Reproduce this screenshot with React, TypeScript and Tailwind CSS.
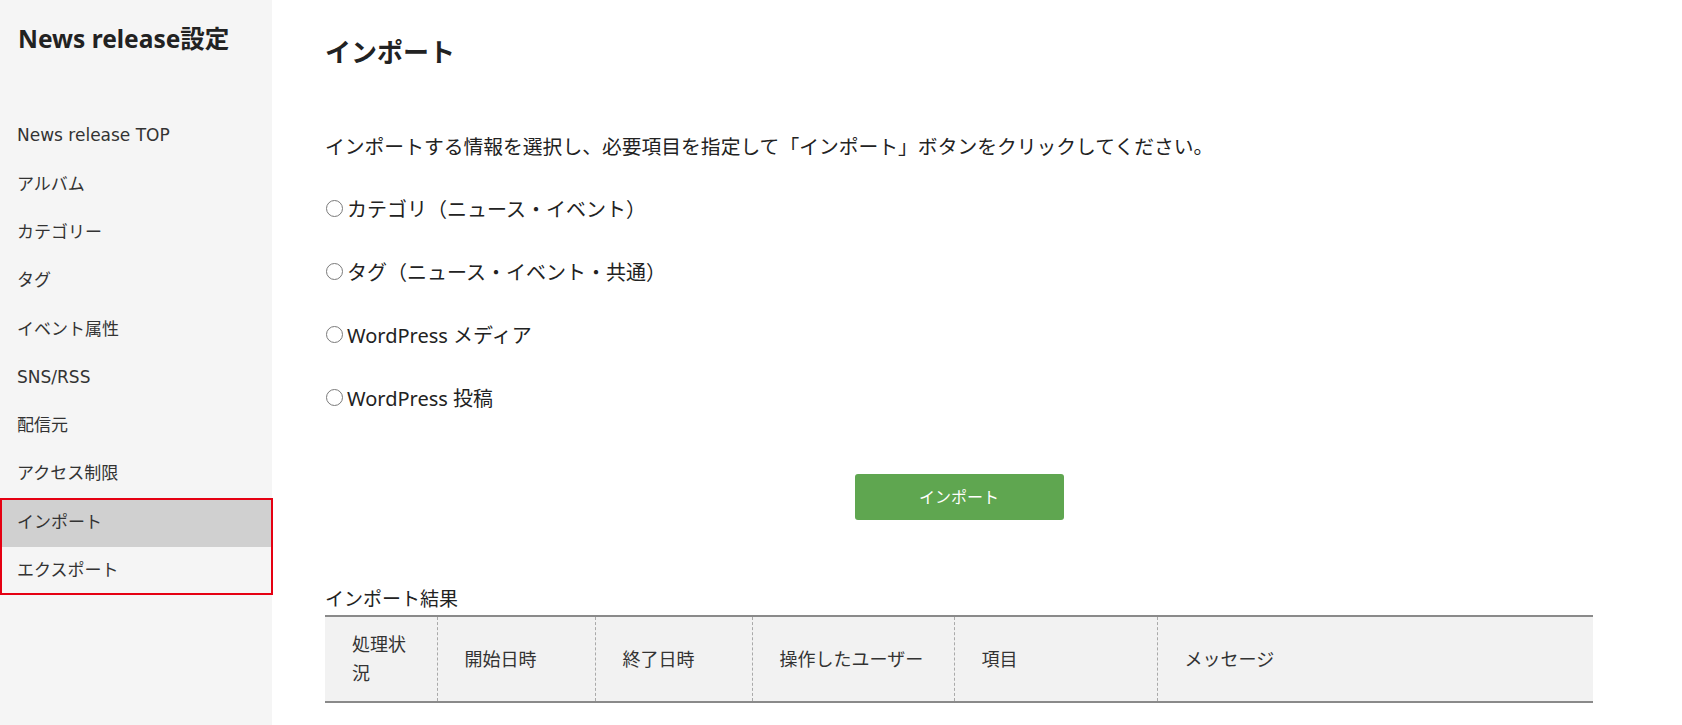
import type { ReactNode } from 'react';

const FONT = { fontFamily: '"Noto Sans", "Noto Sans CJK JP", sans-serif' };
const NAV_FONT = { fontFamily: '"DejaVu Sans", "Noto Sans CJK JP", sans-serif' };

const NAV_ITEMS = [
  'News release TOP',
  'アルバム',
  'カテゴリー',
  'タグ',
  'イベント属性',
  'SNS/RSS',
  '配信元',
  'アクセス制限',
];

const OPTIONS = [
  'カテゴリ（ニュース・イベント）',
  'タグ（ニュース・イベント・共通）',
  'WordPress メディア',
  'WordPress 投稿',
];

const COLUMNS: { label: ReactNode; width: string }[] = [
  { label: <>処理状<br />況</>, width: 'w-[112px]' },
  { label: '開始日時', width: 'w-[158px]' },
  { label: '終了日時', width: 'w-[157px]' },
  { label: '操作したユーザー', width: 'w-[202px]' },
  { label: '項目', width: 'w-[203px]' },
  { label: 'メッセージ', width: '' },
];

function NavItem({ label, active }: { label: string; active?: boolean }) {
  return (
    <div
      className={`h-[48.3px] flex items-center pl-[17px] text-[17px] text-[#333] ${active ? 'bg-[#d0d0d0]' : ''}`}
      style={NAV_FONT}
    >
      {label}
    </div>
  );
}

function Sidebar() {
  return (
    <aside className="w-[272px] shrink-0 bg-[#f5f5f5] min-h-[725px] pt-[23px]">
      <h2 className="pl-[18px] text-[24.5px] leading-[32px] font-bold text-[#222]">
        News release設定
      </h2>
      <nav className="mt-[57px]">
        {NAV_ITEMS.map((item) => (
          <NavItem key={item} label={item} />
        ))}
        {/* highlighted pair */}
        <div className="outline-2 outline-[#e50012] -outline-offset-2 mr-[-1px]">
          <NavItem label="インポート" active />
          <NavItem label="エクスポート" />
        </div>
      </nav>
    </aside>
  );
}

function RadioRow({ label }: { label: string }) {
  return (
    <label className="mt-[33px] flex items-center h-[30px] text-[20px] leading-[30px] text-[#222]">
      <span className="w-[17px] h-[17px] rounded-full border-[1.5px] border-[#7a7a7a] bg-white mr-[4px] ml-[1px] -mt-[3px] shrink-0" />
      {label}
    </label>
  );
}

export default function App() {
  return (
    <div className="flex w-full min-h-[725px] bg-white" style={FONT}>
      <Sidebar />
      <main className="flex-1 pl-[53px] pr-[89px] pt-[32px]">
        <h1 className="text-[26px] leading-[40px] font-bold text-[#222]">インポート</h1>
        <p className="mt-[60px] text-[19.8px] leading-[30px] text-[#222]">
          インポートする情報を選択し、必要項目を指定して「インポート」ボタンをクリックしてください。
        </p>
        <div className="flex flex-col">
          {OPTIONS.map((o) => (
            <RadioRow key={o} label={o} />
          ))}
        </div>
        <div className="mt-[60px] flex justify-center">
          <button className="w-[209px] h-[46px] rounded-[3px] bg-[#5fa650] text-white text-[16px]">
            インポート
          </button>
        </div>
        <div className="mt-[64px] text-[19px] leading-[30px] text-[#222]">インポート結果</div>
        <table className="mt-px w-full table-fixed border-collapse border-y-2 border-[#8a8a8a] bg-[#f2f2f2]">
          <thead>
            <tr className="h-[86px]">
              {COLUMNS.map((c, i) => (
                <th
                  key={i}
                  className={`${c.width} ${i > 0 ? 'border-l border-dashed border-[#aaa]' : ''} pl-[27px] pr-2 text-left align-middle font-normal text-[18px] leading-[29px] text-[#333]`}
                >
                  {c.label}
                </th>
              ))}
            </tr>
          </thead>
        </table>
      </main>
    </div>
  );
}
